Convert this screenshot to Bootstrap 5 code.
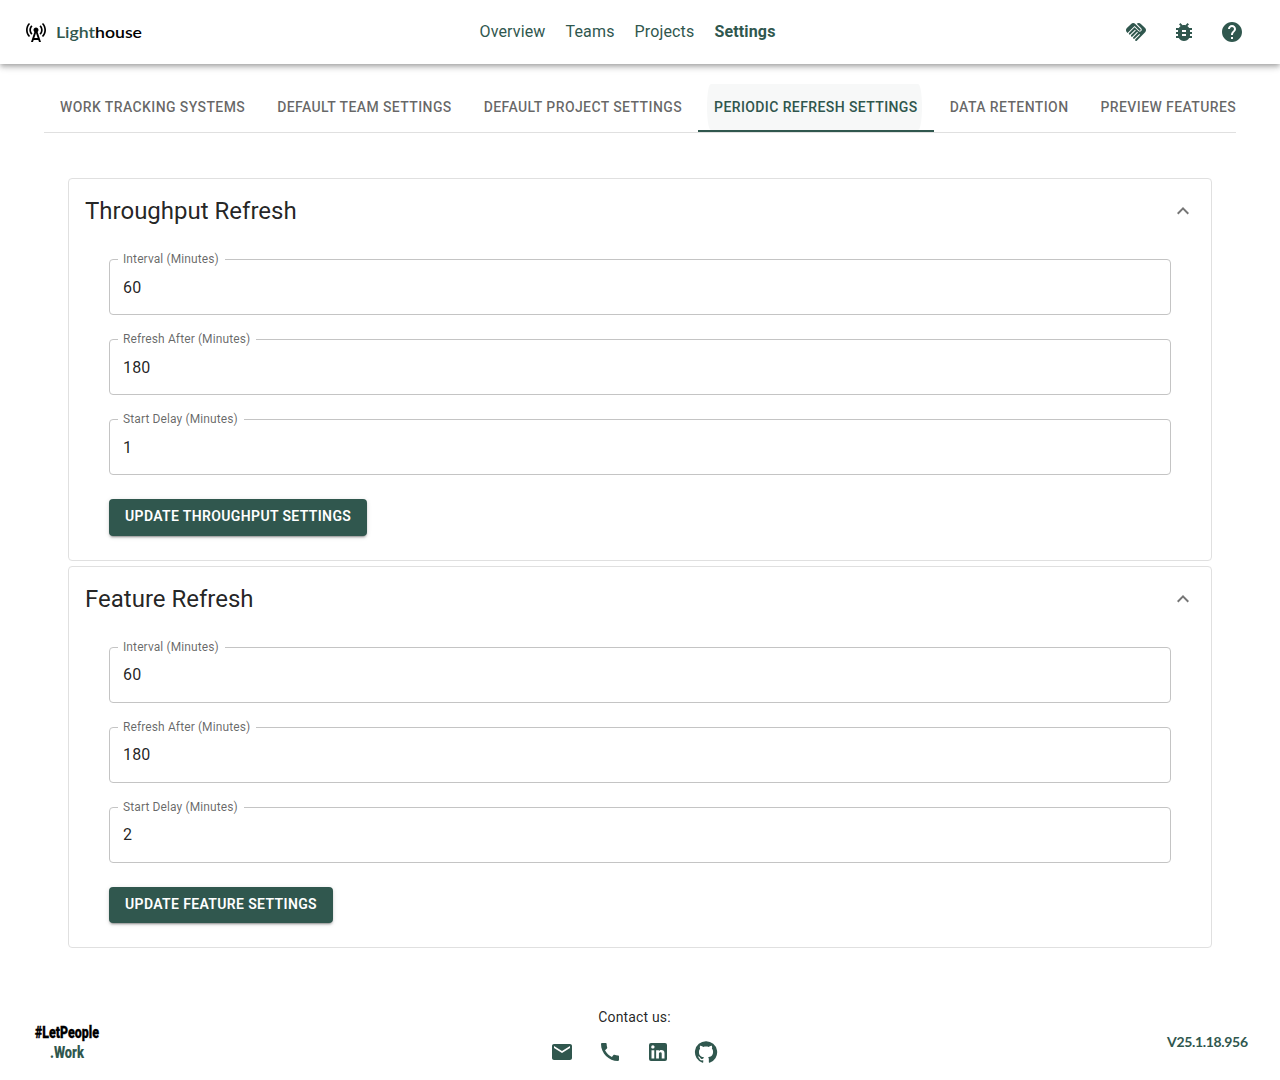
<!DOCTYPE html>
<html lang="en">
<head>
<meta charset="utf-8">
<meta name="viewport" content="width=device-width, initial-scale=1">
<title>Lighthouse</title>
<link href="https://cdn.jsdelivr.net/npm/bootstrap@5.3.0/dist/css/bootstrap.min.css" rel="stylesheet">
<style>
:root { --brand: #30574e; }
body { font-family: Roboto, "Liberation Sans", sans-serif; color: rgba(0,0,0,.87); line-height: 1.5; height: 1080px; overflow: hidden; }
svg { display: block; flex: none; }
.ico { width: 24px; height: 24px; fill: var(--brand); }
.topbar { height: 64px; padding: 0 36px 0 24px; box-shadow: 0 2px 4px -1px rgba(0,0,0,.2), 0 4px 5px 0 rgba(0,0,0,.14), 0 1px 10px 0 rgba(0,0,0,.12); }
.topbar .side { width: 240px; }
.brand-text { width: 90px; height: 30px; margin-left: 8px; }
.mainnav { gap: 20px; margin-left: -13px; letter-spacing: .15px; }
.mainnav a { color: var(--brand); text-decoration: none; }
.tabstrip { margin: 20px 44px 0; height: 49px; border-bottom: 1px solid #e0e0e0; overflow: hidden; }
.tabitem { position: relative; flex: none; height: 48px; padding: 0 16px 2px; border: 0; background: none; font-size: 14px; font-weight: 500; letter-spacing: .4px; color: rgba(0,0,0,.6); white-space: nowrap; }
.tabitem.current { color: var(--brand); border-bottom: 2px solid var(--brand); padding-bottom: 0; }
.tabitem.current::before { content: ""; position: absolute; inset: 0 12px 0 9px; border-radius: 4px / 24px; background: rgba(48,87,78,.04); }
.panels { padding: 45px 68px 0; gap: 5px; }
.panel { height: 382.5px; border: 1px solid #e0e0e0; border-radius: 4px; }
.panel-head { height: 64px; padding: 0 16px; }
.panel-head h2 { font-size: 24px; font-weight: 400; line-height: 32px; }
.panel-head svg { width: 24px; height: 24px; fill: rgba(0,0,0,.54); }
.panel-fields { padding: 16px 40px 0; gap: 24px; }
.field { position: relative; height: 56px; }
.field input { width: 100%; height: 56px; padding: 0 13px; border: 1px solid #c4c4c4; border-radius: 4px; font-size: 16px; letter-spacing: .15px; color: rgba(0,0,0,.87); background: #fff; outline: 0; }
.field label { position: absolute; left: 9px; top: -8px; padding: 0 6px 0 5px; background: #fff; font-size: 12px; line-height: 17px; letter-spacing: .11px; color: rgba(0,0,0,.6); white-space: nowrap; }
.save { height: 36.5px; padding: 0 16px 2px; font-size: 14px; font-weight: 600; letter-spacing: .36px; line-height: 24.5px; color: #fff; background: var(--brand); border: 0; border-radius: 4px; box-shadow: 0 3px 1px -2px rgba(0,0,0,.2), 0 2px 2px 0 rgba(0,0,0,.14), 0 1px 5px 0 rgba(0,0,0,.12); }
.foot { padding: 56px 32px 0 33px; }
.foot .side { width: 240px; }
.slogan { width: 70px; height: 50px; margin-top: 11px; overflow: visible; }
.contact { font-size: 14px; line-height: 24px; letter-spacing: .15px; margin: 1px 14px 0 0; }
.contact-title { padding-left: 2px; }
.links { gap: 24px; margin-top: 11px; }
.version { width: 84px; height: 24px; margin-top: 25px; margin-right: -2px; }
</style>
</head>
<body class="bg-white">
<svg class="d-none" xmlns="http://www.w3.org/2000/svg">
  <symbol id="chev" viewBox="0 0 24 24"><path d="m12 8-6 6 1.410 1.410L12 10.830l4.590 4.580L18 14z"/></symbol>
</svg>

<header class="topbar d-flex align-items-center justify-content-between bg-white">
  <div class="side d-flex align-items-center">
    <svg width="24" height="24" viewBox="0 0 24 24"><path d="M7.3 14.7l1.2-1.2c-1-1-1.5-2.3-1.5-3.5 0-1.3.5-2.6 1.5-3.5L7.3 5.3c-1.3 1.3-2 3-2 4.7s.7 3.4 2 4.7zM19.1 2.9l-1.2 1.2c1.6 1.6 2.4 3.8 2.4 5.9 0 2.1-.8 4.3-2.4 5.9l1.2 1.2c2-2 2.9-4.5 2.9-7.1 0-2.6-1-5.1-2.9-7.1zM6.1 4.1L4.9 2.9C3 4.9 2 7.4 2 10c0 2.6 1 5.1 2.9 7.1l1.2-1.2c-1.6-1.6-2.4-3.8-2.4-5.9 0-2.1.8-4.3 2.4-5.9zM16.7 14.7c1.3-1.3 2-3 2-4.7-.1-1.7-.7-3.4-2-4.7l-1.2 1.2c1 1 1.5 2.3 1.5 3.5 0 1.3-.5 2.6-1.5 3.5l1.2 1.2zM14.5 10c0-1.38-1.12-2.5-2.5-2.5S9.5 8.62 9.5 10c0 .76.34 1.42.87 1.88L7 22h2l.67-2h4.67l.66 2h2l-3.37-10.12c.53-.46.87-1.12.87-1.88zm-4.17 8L12 13l1.67 5h-3.34z"/></svg>
    <svg class="brand-text" viewBox="0 0 90 30"><text x="0" y="21" font-family="Lato, sans-serif" font-size="16" font-weight="600" textLength="86" lengthAdjust="spacingAndGlyphs"><tspan fill="#30574e">Light</tspan><tspan fill="#000">house</tspan></text></svg>
  </div>
  <nav class="mainnav d-flex">
    <a href="#">Overview</a><a href="#">Teams</a><a href="#">Projects</a><a href="#" class="fw-bold">Settings</a>
  </nav>
  <div class="side d-flex justify-content-end gap-4">
    <svg class="ico" viewBox="0 0 24 24"><path d="M16.48 10.41c-.39.39-1.04.39-1.43 0l-4.47-4.46-7.05 7.04-.66-.63c-1.17-1.17-1.17-3.07 0-4.24l4.24-4.24c1.17-1.17 3.07-1.17 4.24 0L16.48 9c.39.39.39 1.02 0 1.41zm.7-2.12c.78.78.78 2.05 0 2.83-1.27 1.27-2.61.22-2.83 0l-3.76-3.76-5.57 5.57c-.39.39-.39 1.02 0 1.41.39.39 1.02.39 1.42 0l4.62-4.62.71.71-4.62 4.62c-.39.39-.39 1.02 0 1.41.39.39 1.02.39 1.42 0l4.62-4.62.71.71-4.62 4.62c-.39.39-.39 1.02 0 1.41.39.39 1.02.39 1.41 0l4.62-4.62.71.71-4.62 4.62c-.39.39-.39 1.02 0 1.41.39.39 1.02.39 1.41 0l8.32-8.34c1.17-1.17 1.17-3.07 0-4.24l-4.24-4.24c-1.15-1.15-3.01-1.17-4.18-.06l4.47 4.47z"/></svg>
    <svg class="ico" viewBox="0 0 24 24"><path d="M20 8h-2.81c-.45-.78-1.07-1.45-1.82-1.96L17 4.41 15.59 3l-2.17 2.17C12.96 5.06 12.49 5 12 5c-.49 0-.96.06-1.41.17L8.41 3 7 4.41l1.62 1.63C7.88 6.55 7.26 7.22 6.81 8H4v2h2.09c-.05.33-.09.66-.09 1v1H4v2h2v1c0 .34.04.67.09 1H4v2h2.81c1.04 1.79 2.97 3 5.19 3s4.15-1.21 5.19-3H20v-2h-2.09c.05-.33.09-.66.09-1v-1h2v-2h-2v-1c0-.34-.04-.67-.09-1H20V8zm-6 8h-4v-2h4v2zm0-4h-4v-2h4v2z"/></svg>
    <svg class="ico" viewBox="0 0 24 24"><path d="M12 2C6.48 2 2 6.48 2 12s4.48 10 10 10 10-4.48 10-10S17.52 2 12 2zm1 17h-2v-2h2v2zm2.07-7.75l-.9.92C13.45 12.9 13 13.5 13 15h-2v-.5c0-1.1.45-2.1 1.17-2.83l1.24-1.26c.37-.36.59-.86.59-1.41 0-1.1-.9-2-2-2s-2 .9-2 2H8c0-2.21 1.79-4 4-4s4 1.79 4 4c0 .88-.36 1.68-.93 2.25z"/></svg>
  </div>
</header>

<div class="tabstrip d-flex">
  <button class="tabitem">WORK TRACKING SYSTEMS</button>
  <button class="tabitem">DEFAULT TEAM SETTINGS</button>
  <button class="tabitem">DEFAULT PROJECT SETTINGS</button>
  <button class="tabitem current">PERIODIC REFRESH SETTINGS</button>
  <button class="tabitem">DATA RETENTION</button>
  <button class="tabitem">PREVIEW FEATURES</button>
</div>

<main class="panels d-flex flex-column">
  <section class="panel">
    <div class="panel-head d-flex align-items-center justify-content-between">
      <h2 class="m-0">Throughput Refresh</h2><svg><use href="#chev"/></svg>
    </div>
    <div class="panel-fields d-flex flex-column align-items-start">
      <div class="field w-100"><input id="t1" value="60"><label for="t1">Interval (Minutes)</label></div>
      <div class="field w-100"><input id="t2" value="180"><label for="t2">Refresh After (Minutes)</label></div>
      <div class="field w-100"><input id="t3" value="1"><label for="t3">Start Delay (Minutes)</label></div>
      <button class="btn save">UPDATE THROUGHPUT SETTINGS</button>
    </div>
  </section>
  <section class="panel">
    <div class="panel-head d-flex align-items-center justify-content-between">
      <h2 class="m-0">Feature Refresh</h2><svg><use href="#chev"/></svg>
    </div>
    <div class="panel-fields d-flex flex-column align-items-start">
      <div class="field w-100"><input id="f1" value="60"><label for="f1">Interval (Minutes)</label></div>
      <div class="field w-100"><input id="f2" value="180"><label for="f2">Refresh After (Minutes)</label></div>
      <div class="field w-100"><input id="f3" value="2"><label for="f3">Start Delay (Minutes)</label></div>
      <button class="btn save">UPDATE FEATURE SETTINGS</button>
    </div>
  </section>
</main>

<footer class="foot d-flex justify-content-between align-items-start">
  <div class="side">
    <svg class="slogan" viewBox="0 -3 70 50" font-family="Roboto, sans-serif" font-weight="900" font-size="17"><text x="2" y="20" stroke="#000" stroke-width=".3" textLength="64" lengthAdjust="spacingAndGlyphs">#LetPeople</text><text x="17" y="40" fill="#30574e" textLength="34" lengthAdjust="spacingAndGlyphs">.Work</text></svg>
  </div>
  <div class="contact text-center">
    <div class="contact-title">Contact us:</div>
    <div class="links d-flex">
      <svg class="ico" viewBox="0 0 24 24"><path d="M20 4H4c-1.100 0-1.990.9-1.990 2L2 18c0 1.100.9 2 2 2h16c1.100 0 2-.9 2-2V6c0-1.100-.9-2-2-2zm0 4-8 5-8-5V6l8 5 8-5v2z"/></svg>
      <svg class="ico" viewBox="0 0 24 24"><path d="M20.010 15.380c-1.230 0-2.420-.2-3.530-.56-.35-.12-.74-.03-1.010.24l-1.570 1.970c-2.830-1.350-5.480-3.900-6.890-6.830l1.950-1.660c.27-.28.35-.67.24-1.020-.37-1.110-.56-2.300-.56-3.530 0-.54-.45-.99-.99-.99H4.190C3.650 3 3 3.240 3 3.990 3 13.280 10.730 21 20.010 21c.71 0 .99-.63.99-1.180v-3.450c0-.54-.45-.99-.99-.99z"/></svg>
      <svg class="ico" viewBox="0 0 24 24"><path d="M19 3a2 2 0 0 1 2 2v14a2 2 0 0 1-2 2H5a2 2 0 0 1-2-2V5a2 2 0 0 1 2-2h14m-.5 15.500v-5.300a3.260 3.260 0 0 0-3.260-3.260c-.85 0-1.840.52-2.320 1.300v-1.110h-2.790v8.370h2.790v-4.930c0-.77.62-1.400 1.390-1.400a1.400 1.400 0 0 1 1.400 1.400v4.930h2.790M6.880 8.560a1.680 1.680 0 0 0 1.680-1.680c0-.93-.75-1.690-1.680-1.690a1.690 1.690 0 0 0-1.690 1.690c0 .93.76 1.680 1.690 1.680m1.390 9.940v-8.370H5.500v8.370h2.770z"/></svg>
      <svg class="ico" viewBox="0 0 24 24"><path d="M12 1.270a11 11 0 0 0-3.480 21.460c.55.09.73-.28.73-.55v-1.840c-3.030.64-3.670-1.460-3.670-1.460-.55-1.290-1.280-1.650-1.280-1.650-.92-.65.1-.65.1-.65 1.100 0 1.730 1.100 1.730 1.100.92 1.650 2.570 1.200 3.210.92a2 2 0 0 1 .64-1.470c-2.470-.27-5.040-1.190-5.040-5.500 0-1.100.46-2.100 1.200-2.840a3.760 3.760 0 0 1 0-2.930s.91-.28 3.110 1.100c1.800-.49 3.700-.49 5.500 0 2.100-1.380 3.020-1.100 3.020-1.100a3.760 3.760 0 0 1 .1 2.930c.83.74 1.200 1.740 1.200 2.940 0 4.210-2.570 5.130-5.040 5.400.45.37.82.92.82 2.020v3.030c0 .27.1.64.73.55A11 11 0 0 0 12 1.270"/></svg>
    </div>
  </div>
  <div class="side d-flex justify-content-end">
    <svg class="version" viewBox="0 0 84 24"><text x="1" y="18" font-family="Lato, sans-serif" font-size="14" font-weight="700" fill="#30574e" textLength="81" lengthAdjust="spacing">V25.1.18.956</text></svg>
  </div>
</footer>
<script src="https://cdn.jsdelivr.net/npm/bootstrap@5.3.0/dist/js/bootstrap.bundle.min.js"></script>
</body>
</html>
